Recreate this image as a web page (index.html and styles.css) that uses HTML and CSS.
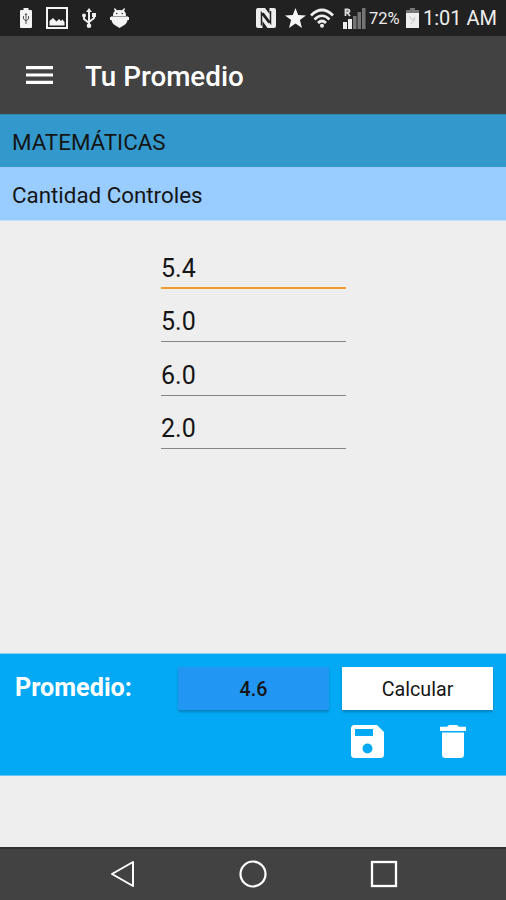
FILE: index.html
```html
<!DOCTYPE html>
<html lang="es">
<head>
<meta charset="utf-8">
<title>Tu Promedio</title>
<link rel="stylesheet" href="styles.css">
</head>
<body>
<div class="screen">
  <div class="status">
    <div class="status-group notifications">
      <svg width="12" height="20" viewBox="0 0 12 20"><path fill="#f4f4f4" d="M3.500 0h5v2H11q1 0 1 1v16q0 1-1 1H1q-1 0-1-1V3q0-1 1-1h2.500z"/><path fill="none" stroke="#555" stroke-width="1" d="M6 6v10M3.500 8v3L6 13l2.500-2V8M5 7l1-1.500L7 7"/></svg>
      <svg width="22" height="22" viewBox="0 0 22 22"><rect x="1" y="1" width="20" height="20" fill="#222" stroke="#f4f4f4" stroke-width="2"/><path fill="#f4f4f4" d="M3.500 18.500V14L7 11l3.500 3.500L13 12l2 2 1.500-1.500 2 2.500v3.500z"/></svg>
      <svg width="14" height="20" viewBox="0 0 14 20"><path fill="none" stroke="#eee" stroke-width="2" d="M7 2v16M2 8v3l5 4M12 7v3l-5 4"/><path fill="#eee" d="M7 0l3 4H4zM10 5h4v4h-4z"/><circle cx="2" cy="7.500" r="2" fill="#eee"/><circle cx="7" cy="17.700" r="2.300" fill="#eee"/></svg>
      <svg width="19" height="20" viewBox="0 0 19 20"><path fill="#f4f4f4" d="M3 8q0-4 2-5L3.800.8l1.200-.6L7 2.300q2.500-.6 5 0L14 .2l1.200.6L14 3q2 1 2 5zM0 9h19v3h-1.500q-.5 3.500-4 5.500l-4 2.500-4-2.500Q2 15.500 1.500 12H0z"/><path stroke="#999" d="M1 8.500h17"/><circle cx="6.700" cy="5.500" r=".8" fill="#333"/><circle cx="12.300" cy="5.500" r=".8" fill="#333"/></svg>
    </div>
    <div class="status-group system">
      <svg class="nfc" width="20" height="20" viewBox="0 0 20 20"><path fill="#eee" d="M2 0h7l4.500 6V0H18q2 0 2 2v16q0 2-2 2h-6.500L6.500 13v7H2q-2 0-2-2V2Q0 0 2 0z"/><path fill="none" stroke="#222" stroke-width="1.500" d="M5.500 17.500V5l7.500 10M14.500 3v12L7 5"/></svg>
      <svg class="star" width="21" height="20" viewBox="0 0 21 20"><path fill="#f6f6f6" d="M10.500 0l2.700 7.100 7.800.3-6.100 4.700L17 20l-6.500-4.500L4 20l2.100-7.900L0 7.400l7.800-.3z"/></svg>
      <svg class="wifi" width="24" height="20" viewBox="0 0 24 20"><g fill="none" stroke="#eee" stroke-width="2.700"><path d="M1 7.500q11-11 22 0M4.500 11.500q7.500-7.500 15 0M8 15q4-4 8 0"/></g><circle cx="12" cy="17.700" r="2" fill="#eee"/></svg>
      <svg class="signal" width="23" height="21" viewBox="0 0 23 21"><path fill="#eee" d="M0 14h4v7H0zM5 11h4v10H5z"/><path fill="#747474" d="M10 8h3.500v13H10zM14.500 4H18v17h-3.500zM19 0h3.500v21H19z"/><path fill="none" stroke="#ddd" stroke-width="1.800" d="M2.500 8V1.500h2q2 0 2 1.500t-2 1.500h-2M4.500 5L7 8"/></svg>
      <span class="percent">72%</span>
      <svg class="battery" width="13" height="20" viewBox="0 0 13 20"><path fill="#777" d="M4 0h5v2h4v4H0V2h4z"/><path fill="#eee" d="M0 5h13v15H0z"/><path fill="none" stroke="#ccc" d="M4 8l1 3h3l-3 5M9 9l-1 4"/></svg>
      <span class="clock">1:01 AM</span>
    </div>
  </div>
  <header class="appbar">
    <svg width="27" height="20" viewBox="0 0 27 20"><path fill="#fff" d="M0 1h27v3.200H0zM0 8.400h27v3.200H0zM0 15.800h27V19H0z"/></svg>
    <h1>Tu Promedio</h1>
  </header>
  <div class="subject"><span>MATEMÁTICAS</span></div>
  <div class="section"><span>Cantidad Controles</span></div>
  <main class="grades">
    <div class="grade active">5.4</div>
    <div class="grade">5.0</div>
    <div class="grade">6.0</div>
    <div class="grade">2.0</div>
  </main>
  <section class="panel">
    <div class="row">
      <div class="label"><span>Promedio:</span></div>
      <div class="button result">4.6</div>
      <div class="button calc"><span>Calcular</span></div>
    </div>
    <div class="actions">
      <svg width="33" height="33" viewBox="0 0 33 33"><path fill="#fff" fill-rule="evenodd" d="M3.500 0H26l7 7v22.500q0 3.500-3.500 3.500h-26Q0 33 0 29.500v-26Q0 0 3.500 0zM4 4v7h18V4zM16.500 18.500a5 5 0 1 0 0 10 5 5 0 1 0 0-10z"/></svg>
      <svg width="26" height="33" viewBox="0 0 26 33"><path fill="#fff" d="M9 0h8l2 1.800h7v4.200H0V1.800h7zM2 7.500h22v22q0 3.500-3.500 3.500h-15Q2 33 2 29.500z"/></svg>
    </div>
  </section>
  <div class="spacer"></div>
  <nav class="navbar">
    <svg width="24" height="28" viewBox="0 0 24 28"><path fill="none" stroke="#fff" stroke-width="2" stroke-linejoin="round" d="M22 2v24L1 14z"/></svg>
    <svg width="28" height="28" viewBox="0 0 28 28"><circle cx="14" cy="14" r="12.500" fill="none" stroke="#fff" stroke-width="2.200"/></svg>
    <svg width="28" height="28" viewBox="0 0 28 28"><rect x="2" y="2" width="24" height="24" fill="none" stroke="#fff" stroke-width="2.300"/></svg>
  </nav>
</div>
</body>
</html>
```
FILE: styles.css
```css
* { box-sizing: border-box; }
body { margin: 0; font-family: Roboto, "Liberation Sans", sans-serif; color: #151515; }
svg { display: block; flex: none; }
.screen { width: 506px; height: 900px; display: flex; flex-direction: column; background: #eee; overflow: hidden; }
.status { height: 36px; flex: none; display: flex; justify-content: space-between; padding: 0 9px 0 20px; background: #212121; color: #eee; }
.status-group { display: flex; align-items: center; }
.notifications { gap: 14px; }
.nfc { margin-right: 1px; }
.star { margin-left: 8px; }
.wifi { margin-left: 4px; }
.signal { margin-left: 9px; }
.percent { width: 32px; margin-left: 3px; font-size: 16.500px; white-space: nowrap; }
.battery { margin-left: 5px; }
.clock { width: 74px; margin-left: 4px; font-size: 20px; white-space: nowrap; }
.appbar { height: 78px; flex: none; display: flex; align-items: center; padding: 0 26px 1px; gap: 32px; background: #424242; color: #fff; }
.appbar h1 { margin: 4px 0 0; font-size: 27.800px; font-weight: 500; line-height: 32px; }
.subject, .section { flex: none; padding: 2px 12px 0; display: flex; align-items: center; font-size: 22.350px; }
.subject { height: 53px; background: #3399cc; border-top: 1px solid #2b87b5; }
.section { height: 54px; background: #99ccff; border-bottom: 1px solid #c4e1fa; }
.grades { height: 432px; flex: none; padding-top: 28px; display: flex; flex-direction: column; align-items: center; }
.grade { width: 185px; height: 40px; margin: 0 0 13.300px 1px; padding: 4px 0 0; flex: none; font-size: 25px; line-height: 32px; border-bottom: 1px solid #858585; }
.grade.active { border-bottom: 2px solid #f59a2f; }
.panel { height: 123px; flex: none; padding: 13px 13px 0 15px; background: #03a9f4; border-top: 1px solid #8fcdf0; border-bottom: 1px solid #6bc4ef; }
.row { display: flex; }
.label { width: 163px; padding-top: 6px; color: #fff; font-size: 25.200px; font-weight: 700; line-height: 30px; }
.button { width: 151px; height: 43px; display: flex; align-items: center; justify-content: center; font-size: 19.700px; padding-top: 1px; box-shadow: 0 2px 2px rgba(0, 65, 105, .35); }
.result { background: #2196f3; font-weight: 500; }
.calc { margin-left: 13px; background: #fff; }
.actions { display: flex; justify-content: flex-end; gap: 56px; padding: 15px 27px 0 0; }
.spacer { flex: 1; }
.navbar { height: 53px; flex: none; display: flex; align-items: center; padding: 0 0 2px 111px; gap: 103.500px; background: #424242; border-top: 2px solid #303030; }
```
